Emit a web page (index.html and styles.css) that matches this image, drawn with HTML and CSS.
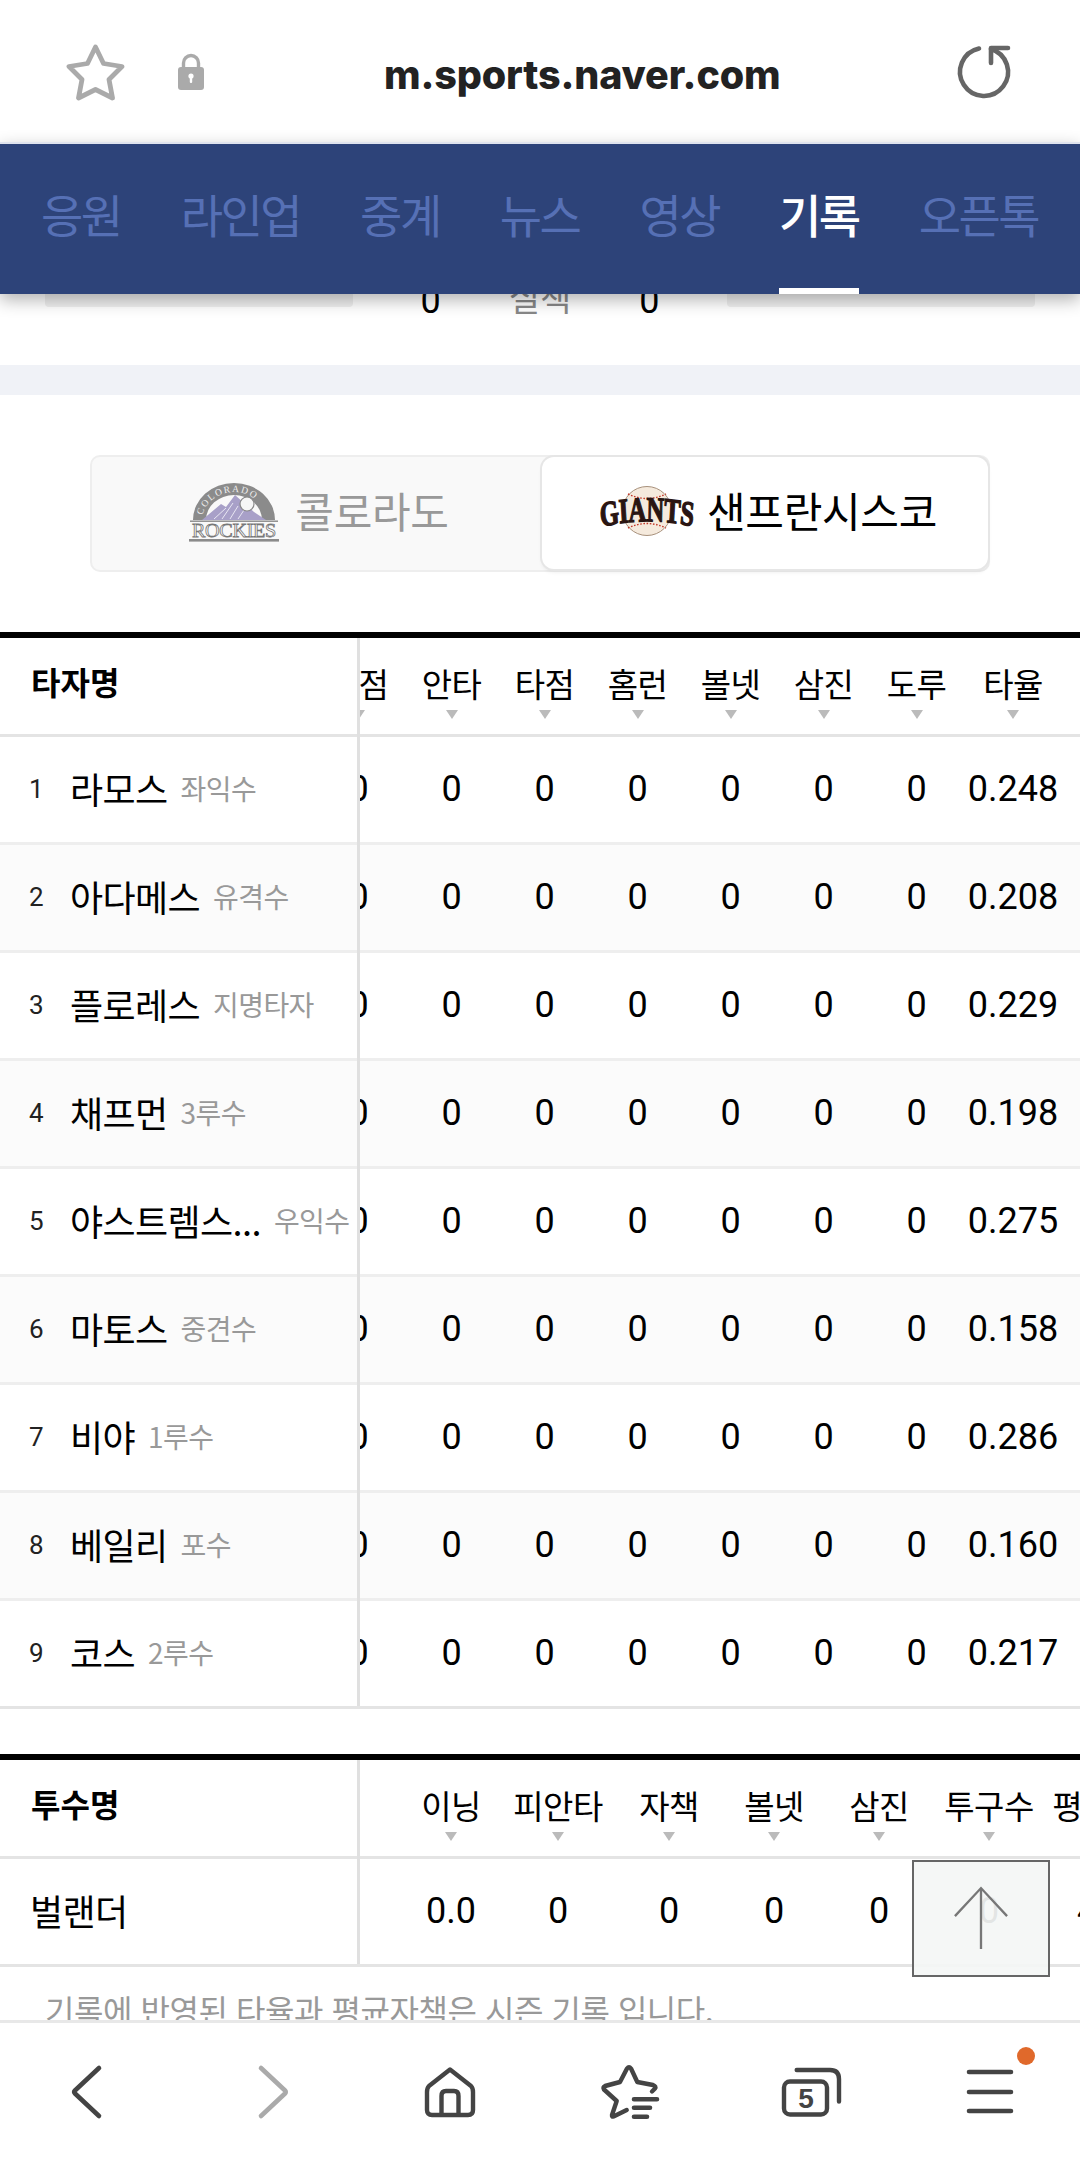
FILE: index.html
```html
<!DOCTYPE html>
<html lang="ko">
<head>
<meta charset="utf-8">
<title>m.sports.naver.com</title>
<link rel="stylesheet" href="styles.css">
</head>
<body>
<div class="phone">
  <header class="urlbar">
    <svg class="ic-star" viewBox="0 0 60 60"><path d="M29.5 4 L37.5 20.5 L56 23.5 L43 36.5 L46.5 55 L29.5 46.5 L12.5 55 L16 36.5 L3 23.5 L21.5 20.5 Z" fill="none" stroke="#aaa" stroke-width="4.8" stroke-linejoin="round"/></svg>
    <svg class="ic-lock" viewBox="0 0 28 38"><path d="M6.5 16 V10 a7.5 7.5 0 0 1 15 0 V16" fill="none" stroke="#aaa" stroke-width="3.4"/><rect x="1" y="14" width="26" height="23" rx="3" fill="#aaa"/><circle cx="14" cy="23" r="2.6" fill="#fff"/><rect x="12.8" y="23" width="2.4" height="7" rx="1" fill="#fff"/></svg>
    <div class="url">m.sports.naver.com</div>
    <svg class="ic-reload" viewBox="0 0 60 60"><path d="M25 6.5 A24 24 0 1 0 37 7" fill="none" stroke="#666" stroke-width="4.6" stroke-linecap="round"/><path d="M37 21 V6 H54" fill="none" stroke="#666" stroke-width="4.6" stroke-linecap="round" stroke-linejoin="round"/></svg>
  </header>
  <nav class="tabs">
    <a class="tab">응원</a><a class="tab">라인업</a><a class="tab">중계</a><a class="tab">뉴스</a><a class="tab">영상</a><a class="tab on">기록</a><a class="tab">오픈톡</a>
  </nav>
  <main class="content">
    <div class="cut">
      <div class="bar"></div>
      <div class="mid"><b class="n">0</b><span class="lab">실책</span><b class="n">0</b></div>
      <div class="bar"></div>
    </div>
    <div class="band"></div>
    <div class="teams">
      <div class="team">
        <svg class="logo rockies" viewBox="0 0 92 60"><defs><path id="arc" d="M14 39 A32 29 0 0 1 78 39"/></defs>
          <path d="M5 38 A41 37 0 0 1 87 38 L74 38 A28 25 0 0 0 18 38 Z" fill="#8b8b8b"/>
          <text font-family="Liberation Serif, serif" font-size="9.5" fill="#f0f0f0" letter-spacing="1.6"><textPath href="#arc" startOffset="6%">COLORADO</textPath></text>
          <path d="M14 38 L33 22 L38 25 L47 13 L56 21 L66 30 L78 38 Z" fill="#a8a0c8"/>
          <path d="M26 37 L38 26 M34 37 L45 21 M42 37 L50 24 M50 37 L56 28" stroke="#e8e6f2" stroke-width="1"/>
          <circle cx="59" cy="22" r="7" fill="#f6f6f6" stroke="#888" stroke-width="1.2"/>
          <rect x="2" y="38.5" width="88" height="1.4" fill="#888"/>
          <text x="46" y="55" text-anchor="middle" font-family="Liberation Serif, serif" font-size="19" textLength="84" lengthAdjust="spacingAndGlyphs" fill="#fff" stroke="#777" stroke-width=".8">ROCKIES</text>
          <rect x="1" y="57" width="90" height="2.6" fill="#8b8b8b"/>
        </svg>
        <span>콜로라도</span>
      </div>
      <div class="team active">
        <svg class="logo giants" viewBox="0 0 96 52"><defs><path id="gi" d="M1 29.5 Q47 21.5 95 29.5"/></defs>
          <circle cx="47" cy="26" r="24.5" fill="#f5eadd" stroke="#a8917c"/>
          <path d="M28 9 Q47 18 66 9 M28 43 Q47 34 66 43" fill="none" stroke="#c4392a" stroke-width="1.4" stroke-dasharray="1.6 1.6"/>
          <g transform="scale(1 1.42)"><text font-family="Liberation Serif, serif" font-weight="700" font-size="24.5" fill="#2a1512" stroke="#2a1512" stroke-width="1"><textPath href="#gi">GIANTS</textPath></text></g>
        </svg>
        <span>샌프란시스코</span>
      </div>
    </div>

    <section class="board">
      <div class="fixed">
        <div class="head"><b>타자명</b></div>
        <div class="row"><i>1</i><strong>라모스</strong><em>좌익수</em></div>
        <div class="row alt"><i>2</i><strong>아다메스</strong><em>유격수</em></div>
        <div class="row"><i>3</i><strong>플로레스</strong><em>지명타자</em></div>
        <div class="row alt"><i>4</i><strong>채프먼</strong><em>3루수</em></div>
        <div class="row"><i>5</i><strong>야스트렘스...</strong><em>우익수</em></div>
        <div class="row alt"><i>6</i><strong>마토스</strong><em>중견수</em></div>
        <div class="row"><i>7</i><strong>비야</strong><em>1루수</em></div>
        <div class="row alt"><i>8</i><strong>베일리</strong><em>포수</em></div>
        <div class="row"><i>9</i><strong>코스</strong><em>2루수</em></div>
      </div>
      <div class="scroll">
        <div class="track bat">
          <div class="head cols"><span>득점</span><span>안타</span><span>타점</span><span>홈런</span><span>볼넷</span><span>삼진</span><span>도루</span><span>타율</span></div>
          <div class="row cols"><u>0</u><u>0</u><u>0</u><u>0</u><u>0</u><u>0</u><u>0</u><u>0.248</u></div>
          <div class="row cols alt"><u>0</u><u>0</u><u>0</u><u>0</u><u>0</u><u>0</u><u>0</u><u>0.208</u></div>
          <div class="row cols"><u>0</u><u>0</u><u>0</u><u>0</u><u>0</u><u>0</u><u>0</u><u>0.229</u></div>
          <div class="row cols alt"><u>0</u><u>0</u><u>0</u><u>0</u><u>0</u><u>0</u><u>0</u><u>0.198</u></div>
          <div class="row cols"><u>0</u><u>0</u><u>0</u><u>0</u><u>0</u><u>0</u><u>0</u><u>0.275</u></div>
          <div class="row cols alt"><u>0</u><u>0</u><u>0</u><u>0</u><u>0</u><u>0</u><u>0</u><u>0.158</u></div>
          <div class="row cols"><u>0</u><u>0</u><u>0</u><u>0</u><u>0</u><u>0</u><u>0</u><u>0.286</u></div>
          <div class="row cols alt"><u>0</u><u>0</u><u>0</u><u>0</u><u>0</u><u>0</u><u>0</u><u>0.160</u></div>
          <div class="row cols"><u>0</u><u>0</u><u>0</u><u>0</u><u>0</u><u>0</u><u>0</u><u>0.217</u></div>
        </div>
      </div>
    </section>

    <section class="board second">
      <div class="fixed">
        <div class="head"><b>투수명</b></div>
        <div class="row"><strong class="solo">벌랜더</strong></div>
      </div>
      <div class="scroll">
        <div class="track pit">
          <div class="head cols"><span>이닝</span><span>피안타</span><span>자책</span><span>볼넷</span><span>삼진</span><span>투구수</span><span>평균자책</span></div>
          <div class="row cols"><u>0.0</u><u>0</u><u>0</u><u>0</u><u>0</u><u>0</u><u>4.50</u></div>
        </div>
      </div>
    </section>
    <p class="note">기록에 반영된 타율과 평균자책은 시즌 기록 입니다.</p>

    <div class="totop"><svg viewBox="0 0 138 117"><path d="M69 90 V27 M42 56 L69 27 L96 56" fill="none" stroke="#777" stroke-width="2.4"/></svg></div>
  </main>
  <footer class="dock">
    <svg class="d-ic" viewBox="0 0 64 64"><path d="M44 8 L20 30.5 Q18.5 32 20 33.5 L44 56" fill="none" stroke="#444" stroke-width="4.6" stroke-linecap="round"/></svg>
    <svg class="d-ic" viewBox="0 0 64 64"><path d="M20 8 L44 30.5 Q45.5 32 44 33.5 L20 56" fill="none" stroke="#aaa" stroke-width="4.6" stroke-linecap="round"/></svg>
    <svg class="d-ic" viewBox="0 0 64 64"><path d="M32 9.5 L53 26 Q55 28 55 32 V50 Q55 55 50 55 H14 Q9 55 9 50 V32 Q9 28 11 26 Z M23.5 55 V36 Q23.5 31 28 31 H36 Q40.5 31 40.5 36 V55" fill="none" stroke="#444" stroke-width="4.4" stroke-linejoin="round"/></svg>
    <svg class="d-ic" viewBox="0 0 64 64"><path d="M28.7 50 L15.5 56.5 Q13.7 57 14 55 L18.7 41 L6 29.5 Q4.5 27 7 26 L22 22 L29 8.5 Q31 6 33 8.5 L39.3 22 L55 25 Q58.5 26.5 57 28.5 L54 31.5" fill="none" stroke="#444" stroke-width="4.4" stroke-linejoin="round" stroke-linecap="round"/><path d="M36 39.3 H59 M36 47.7 H52 M36 56.7 H49" stroke="#444" stroke-width="4.6" stroke-linecap="round"/></svg>
    <svg class="d-ic" viewBox="0 0 64 64"><path d="M17.7 10 H51 Q60 10 60 19 V41.5" fill="none" stroke="#444" stroke-width="4.4" stroke-linecap="round"/><rect x="5" y="21.5" width="43" height="33" rx="6" fill="none" stroke="#444" stroke-width="4.4"/><text x="27" y="47.5" text-anchor="middle" font-family="Liberation Sans, sans-serif" font-weight="700" font-size="28" fill="#444">5</text></svg>
    <div class="d-menu"><svg class="d-ic" viewBox="0 0 64 64"><path d="M11 12 H53 M11 32 H53 M11 51 H53" stroke="#444" stroke-width="4.6" stroke-linecap="round"/></svg><span class="dot"></span></div>
  </footer>
</div>
</body>
</html>
```
FILE: styles.css
```css
* { box-sizing: border-box; }
html, body { margin: 0; padding: 0; background: #fff; }
body { font-family: "Noto Sans CJK KR", "Roboto", sans-serif; color: #000; }
.phone { width: 1080px; height: 2164px; display: flex; flex-direction: column; overflow: hidden; }

.urlbar { height: 142px; flex: none; display: flex; align-items: center; background: #fff; padding-top: 2px; }
.ic-star { width: 60px; height: 60px; margin-left: 66px; margin-top: 2px; }
.ic-lock { width: 28px; height: 38px; margin-left: 51px; }
.url { margin: 5px 0 0 179px; font: 800 39.5px/52px "Inter", sans-serif; color: #222; letter-spacing: -.15px; white-space: nowrap; }
.ic-reload { width: 60px; height: 60px; margin-left: auto; margin-right: 66px; }

.tabs { height: 152px; flex: none; background: #2d4379; border-top: 2px solid #dfe3ee; display: flex; padding-left: 41px; gap: 60px; position: relative; z-index: 3; box-shadow: 0 6px 16px rgba(0,0,0,.3); }
.tab { position: relative; color: #5670b5; font-size: 46px; line-height: 98px; padding-top: 20px; letter-spacing: -2.5px; height: 150px; white-space: nowrap; }
.tab.on { color: #fff; font-weight: 500; }
.tab.on::after { content: ""; position: absolute; left: 0; right: 0; bottom: 0; height: 6px; background: #fff; }

.content { flex: 1; min-height: 0; position: relative; overflow: hidden; }
.cut { height: 71px; display: grid; grid-template-columns: 308px 1fr 308px; align-items: start; overflow: hidden; padding: 0 45px; }
.bar { height: 13px; background: #f0f0f0; border-radius: 0 0 4px 4px; }
.mid { display: flex; justify-content: center; gap: 68px; margin-top: -11px; }
.n { font: 400 36px/36px "Roboto", sans-serif; }
.lab { font-size: 34px; line-height: 36px; color: #888; margin-top: -4px; }

.band { height: 30px; background: #f0f2f7; }

.teams { margin: 60px 0 0 90px; width: 900px; height: 117px; display: flex; background: #f9f9f9; border: 2px solid #eee; border-radius: 10px; }
.team { flex: 1; display: flex; align-items: center; justify-content: center; gap: 15px; font-size: 42px; letter-spacing: -.3px; color: #999; padding: 0 0 4px 3px; }
.team span { margin-top: -4px; }
.team.active { flex: none; width: 446px; background: #fff; color: #000; border-radius: 12px; margin: 0 0 1px; gap: 11px; padding-left: 7px; box-shadow: 0 0 0 2px #e6e6e6, 0 3px 4px rgba(0,0,0,.08); }
.logo { flex: none; }
.rockies { width: 92px; height: 60px; }
.giants { width: 96px; height: 52px; }

.board { margin-top: 60px; display: flex; border-top: 6px solid #000; border-bottom: 3px solid #e4e4e4; }
.board.second { margin-top: 45px; }
.fixed { width: 360px; flex: none; border-right: 3px solid #e0e0e0; }
.scroll { flex: 1; min-width: 0; overflow: hidden; }
.head { height: 99px; border-bottom: 3px solid #e4e4e4; }
.fixed .head b { display: block; padding: 20px 0 0 31px; font-size: 32px; line-height: 46px; font-weight: 700; }
.row { height: 108px; border-bottom: 3px solid #eee; display: flex; align-items: center; background: #fff; white-space: nowrap; }
.row:last-child { height: 105px; border-bottom: 0; }
.row.alt { background: #fbfbfb; }
.row i { font: 400 26px/1 "Roboto", sans-serif; width: 70px; padding-left: 29px; flex: none; color: #222; margin-top: -2px; }
.row strong { font-weight: 400; font-size: 36px; letter-spacing: -.6px; margin-top: -4px; }
.row strong.solo { padding-left: 30px; }
.row em { font-style: normal; font-size: 28px; color: #999; margin: -4px 0 0 13px; letter-spacing: -.6px; }

.track { width: 900px; }
.bat { margin-left: -48px; }
.cols { display: grid; }
.bat .cols { grid-template-columns: repeat(7, 93px) 100px; }
.pit .cols { grid-template-columns: 106px 108px 114px 96px 114px 106px 140px; padding-left: 38px; }
.head.cols span { position: relative; text-align: center; font-size: 33px; line-height: 46px; padding-top: 22px; letter-spacing: -.5px; white-space: nowrap; }
.head.cols span::after { content: ""; position: absolute; left: 50%; margin-left: -6px; top: 72px; border: 6px solid transparent; border-top: 9px solid #bbb; border-bottom: 0; }
.row.cols u { text-decoration: none; text-align: center; font: 400 36px/1 "Roboto", sans-serif; margin-top: -2px; }
.note { margin: 19px 0 0 45px; font-size: 32px; line-height: 46px; color: #999; letter-spacing: -.45px; white-space: nowrap; }

.totop { position: absolute; left: 912px; top: 1566px; width: 138px; height: 117px; background: rgba(244,246,245,.93); border: 2px solid #666; z-index: 2; }
.totop svg { display: block; width: 100%; height: 100%; }

.dock { height: 144px; flex: none; background: #fff; border-top: 3px solid #e8e8e8; display: flex; align-items: center; padding-bottom: 3px; position: relative; z-index: 3; }
.d-ic { display: block; width: 64px; height: 64px; }
.dock > svg:nth-child(1) { margin-left: 55px; }
.dock > svg:nth-child(2) { margin-left: 122px; }
.dock > svg:nth-child(3) { margin-left: 113px; }
.dock > svg:nth-child(4) { margin-left: 116px; }
.dock > svg:nth-child(5) { margin-left: 117px; }
.d-menu { position: relative; margin-left: 115px; height: 64px; }
.dot { position: absolute; left: 59px; top: -13px; width: 18px; height: 18px; border-radius: 50%; background: #e0692b; }
```
